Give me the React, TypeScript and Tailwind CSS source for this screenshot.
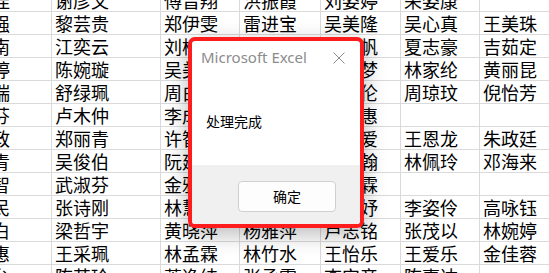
const ROWS: string[][] = [
  ['王俊佳', '谢彦文', '傅晋翔', '洪振霞', '刘姿婷', '荣姿康', ''],
  ['林子强', '黎芸贵', '郑伊雯', '雷进宝', '吴美隆', '吴心真', '王美珠'],
  ['李志南', '江奕云', '刘柏宏', '阮建安', '林子帆', '夏志豪', '吉茹定'],
  ['陈雅婷', '陈婉璇', '吴美玉', '蔡佳燕', '吕佳梦', '林家纶', '黄丽昆'],
  ['张家瑞', '舒绿珮', '周白芷', '张姿妤', '吴志伦', '周琼玟', '倪怡芳'],
  ['许淑芬', '卢木仲', '李成白', '方明华', '林美惠', '', ''],
  ['黄冠政', '郑丽青', '许智伟', '林宜芳', '陈昱爱', '王恩龙', '朱政廷'],
  ['林国青', '吴俊伯', '阮建良', '黄冠宇', '张启翰', '林佩玲', '邓海来'],
  ['陈建智', '武淑芬', '金雅芳', '李文斌', '陈家霖', '', ''],
  ['吴志民', '张诗刚', '林慧萍', '吴依婷', '王思妤', '李姿伶', '高咏钰'],
  ['王美白', '梁哲宇', '黄晓萍', '杨雅萍', '卢志铭', '张茂以', '林婉婷'],
  ['李美惠', '王采珮', '林孟霖', '林竹水', '王怡乐', '王爱乐', '金佳蓉'],
  ['张文台', '陈英玲', '萧逸纬', '张丞霖', '李安帝', '陈嘉达', ''],
];

function Sheet() {
  return (
    <div className="-mt-[11px] -ml-[47px]">
      {ROWS.map((row, r) => (
        <div
          key={r}
          className="grid h-[23px] grid-cols-[99px_109px_79px_81px_80px_79px_80px] border-b border-[#dadada]"
        >
          {row.map((name, c) => (
            <div
              key={c}
              className="flex items-center overflow-hidden whitespace-nowrap border-r border-[#dadada] pl-[3px] text-[18px] leading-none text-black"
            >
              {name}
            </div>
          ))}
        </div>
      ))}
    </div>
  );
}

function MessageBox() {
  return (
    <div className="absolute left-[188px] top-[37px] flex h-[191px] w-[176px] flex-col overflow-hidden rounded-[7px] border-4 border-[#ff1c1c] bg-white shadow-[0_6px_22px_rgba(0,0,0,0.28)]">
      <div className="flex h-[33px] items-center justify-between pl-[9px] pr-[15px]">
        <span className="font-['Noto_Sans',sans-serif] text-[15px] text-[#8c8c8c]">Microsoft Excel</span>
        <svg width="12" height="12" viewBox="0 0 12 12" aria-hidden="true">
          <path d="M0.5 0.5 L11.5 11.5 M11.5 0.5 L0.5 11.5" stroke="#8c8c8c" strokeWidth="1" />
        </svg>
      </div>
      <div className="flex-1 pl-[14px] pt-[37px]">
        <p className="text-[14px] leading-[20px] text-black">处理完成</p>
      </div>
      <div className="flex h-[59px] justify-end bg-[#f0f0f0] pr-[24px] pt-[16px]">
        <button
          type="button"
          className="h-[31px] w-[98px] rounded-[4px] border border-[#d0d0d0] bg-[#fdfdfd] text-[14px] text-black"
        >
          确定
        </button>
      </div>
    </div>
  );
}

export default function App() {
  return (
    <div className="relative h-[273px] w-[549px] overflow-hidden bg-white font-['Noto_Sans_CJK_SC','Noto_Sans',sans-serif]">
      <Sheet />
      <MessageBox />
    </div>
  );
}
